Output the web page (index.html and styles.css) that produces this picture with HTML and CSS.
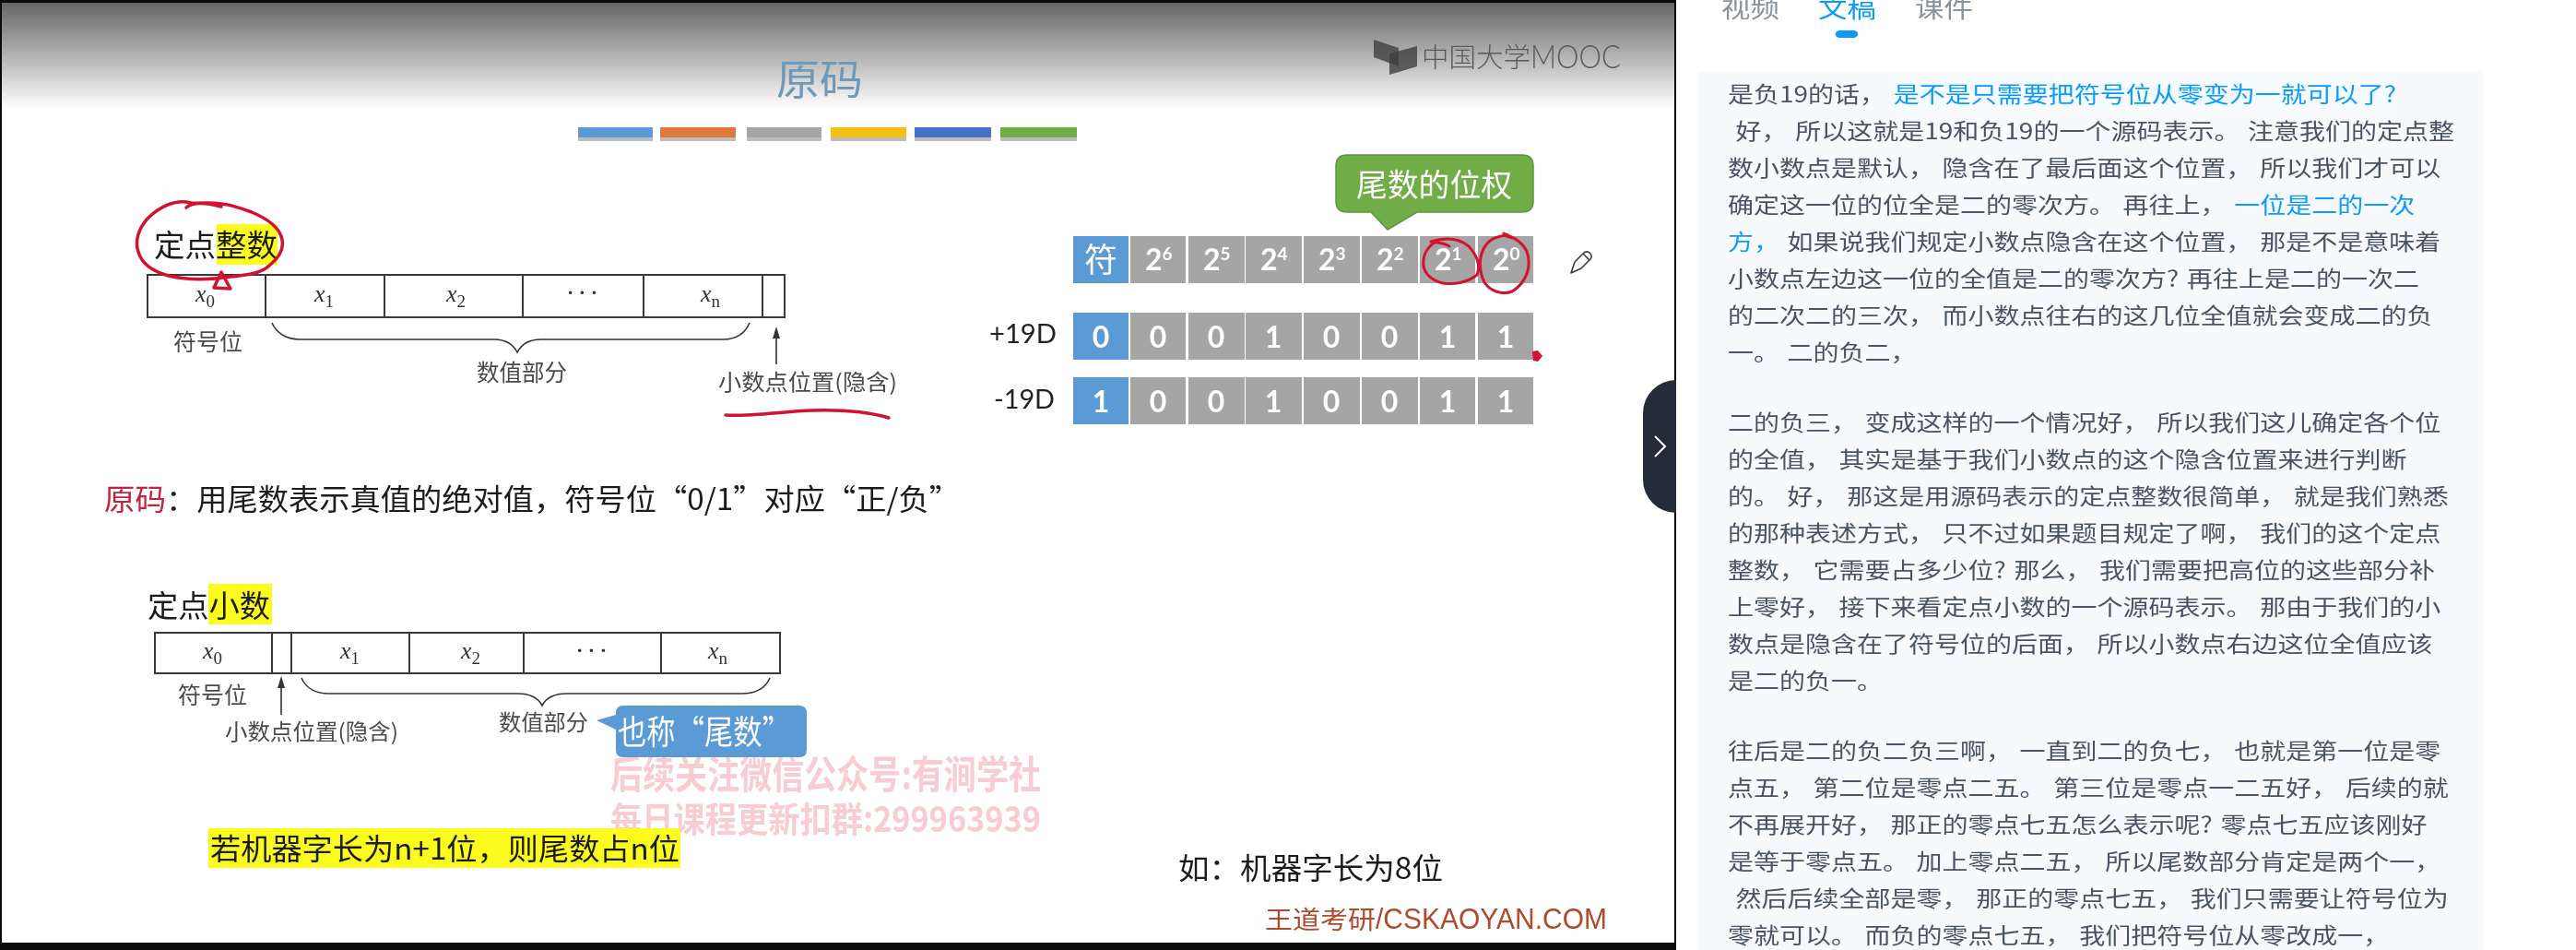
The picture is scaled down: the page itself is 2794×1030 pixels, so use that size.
FILE: index.html
```html
<!DOCTYPE html>
<html lang="zh">
<head>
<meta charset="utf-8">
<title>原码</title>
<link rel="stylesheet" href="styles.css">
</head>
<body>
<div class="page">
  <div class="video">
    <svg class="slide" width="1818" height="1030" viewBox="0 0 1818 1030">
      <defs>
        <linearGradient id="topfade" x1="0" y1="0" x2="0" y2="1">
          <stop offset="0" stop-color="#666666"/>
          <stop offset="1" stop-color="#ffffff"/>
        </linearGradient>
      </defs>
      <rect class="canvas" x="2" y="3" width="1814" height="1019"/>
      <rect x="2" y="3" width="1814" height="115" fill="url(#topfade)"/>

      <!-- logo -->
      <polygon class="book" points="1490,43 1517,52 1517,72 1490,62"/>
      <polygon class="book" points="1537,50 1537,72 1507,81 1507,58"/>
      <text class="cn logo-text" x="1542" y="73" font-size="29" textLength="118" lengthAdjust="spacingAndGlyphs">中国大学</text>
      <text class="lat logo-text" x="1660" y="74" font-size="36" textLength="98" lengthAdjust="spacingAndGlyphs">MOOC</text>

      <!-- title -->
      <text class="cn title" x="842" y="103" font-size="45" textLength="94" lengthAdjust="spacingAndGlyphs">原码</text>
      <rect class="bar-shadow" x="627" y="148" width="81" height="5"/>
      <rect class="bar-shadow" x="716" y="148" width="82" height="5"/>
      <rect class="bar-shadow" x="810" y="148" width="81" height="5"/>
      <rect class="bar-shadow" x="901" y="148" width="82" height="5"/>
      <rect class="bar-shadow" x="992" y="148" width="83" height="5"/>
      <rect class="bar-shadow" x="1085" y="148" width="83" height="5"/>
      <rect class="c-blue" x="627" y="138" width="81" height="11"/>
      <rect class="c-orange" x="716" y="138" width="82" height="11"/>
      <rect class="c-grey" x="810" y="138" width="81" height="11"/>
      <rect class="c-yellow" x="901" y="138" width="82" height="11"/>
      <rect class="c-navy" x="992" y="138" width="83" height="11"/>
      <rect class="c-green" x="1085" y="138" width="83" height="11"/>

      <!-- fixed point integer -->
      <rect class="marker" x="235" y="243" width="66" height="44"/>
      <text class="cn ink" x="167" y="278" font-size="33" textLength="134" lengthAdjust="spacingAndGlyphs">定点整数</text>
      <rect class="cell-line" x="160" y="298" width="691" height="46"/>
      <path class="cell-line" d="M288 298V344M417 298V344M567 298V344M698 298V344M827 298V344"/>
      <text class="math" x="212" y="327">x<tspan class="sub" dy="6">0</tspan></text>
      <text class="math" x="341" y="327">x<tspan class="sub" dy="6">1</tspan></text>
      <text class="math" x="484" y="327">x<tspan class="sub" dy="6">2</tspan></text>
      <text class="math dots" x="615" y="324">· · ·</text>
      <text class="math" x="760" y="327">x<tspan class="sub" dy="6">n</tspan></text>
      <text class="cn soft" x="188" y="380" font-size="25" textLength="75" lengthAdjust="spacingAndGlyphs">符号位</text>
      <path class="brace" d="M295 350C300 362 312 368 325 368H536C550 368 557 374 561 382C565 374 572 368 587 368H784C798 368 808 362 813 350"/>
      <text class="cn soft" x="517" y="413" font-size="25" textLength="98" lengthAdjust="spacingAndGlyphs">数值部分</text>
      <path class="brace" d="M842 395V360"/>
      <polygon class="arrow" points="842,354 838,367 846,367"/>
      <text class="cn soft" x="779" y="423" font-size="24" textLength="194" lengthAdjust="spacingAndGlyphs">小数点位置(隐含)</text>

      <!-- sign-magnitude definition -->
      <text class="cn red" x="113" y="553" font-size="32" textLength="67" lengthAdjust="spacingAndGlyphs">原码</text>
      <text class="cn ink" x="180" y="553" font-size="32" textLength="861" lengthAdjust="spacingAndGlyphs">：用尾数表示真值的绝对值，符号位“0/1”对应“正/负”</text>

      <!-- fixed point fraction -->
      <rect class="marker" x="226" y="633" width="69" height="44"/>
      <text class="cn ink" x="160" y="669" font-size="33" textLength="133" lengthAdjust="spacingAndGlyphs">定点小数</text>
      <rect class="cell-line" x="168" y="686" width="678" height="44"/>
      <path class="cell-line" d="M295 686V730M316 686V730M444 686V730M568 686V730M717 686V730"/>
      <text class="math" x="220" y="714">x<tspan class="sub" dy="6">0</tspan></text>
      <text class="math" x="369" y="714">x<tspan class="sub" dy="6">1</tspan></text>
      <text class="math" x="500" y="714">x<tspan class="sub" dy="6">2</tspan></text>
      <text class="math dots" x="625" y="712">· · ·</text>
      <text class="math" x="768" y="714">x<tspan class="sub" dy="6">n</tspan></text>
      <text class="cn soft" x="193" y="763" font-size="25" textLength="75" lengthAdjust="spacingAndGlyphs">符号位</text>
      <path class="brace" d="M305 775V742"/>
      <polygon class="arrow" points="305,733 301,746 309,746"/>
      <text class="cn soft" x="244" y="802" font-size="24" textLength="188" lengthAdjust="spacingAndGlyphs">小数点位置(隐含)</text>
      <path class="brace" d="M327 735C332 747 344 752 357 752H561C575 752 584 757 588 765C592 757 601 752 615 752H804C818 752 830 747 835 735"/>
      <text class="cn soft" x="541" y="792" font-size="24" textLength="97" lengthAdjust="spacingAndGlyphs">数值部分</text>

      <!-- watermark -->
      <text class="cn wm" x="662" y="855" font-size="42" textLength="467" lengthAdjust="spacingAndGlyphs">后续关注微信公众号:有涧学社</text>
      <text class="cn wm" x="662" y="902" font-size="38" textLength="467" lengthAdjust="spacingAndGlyphs">每日课程更新扣群:299963939</text>

      <!-- blue callout -->
      <path class="c-blue" d="M676 765H867Q875 765 875 773V813Q875 821 867 821H676Q668 821 668 813V791L647 781L668 775V773Q668 765 676 765Z"/>
      <text class="cn on-fill" x="670" y="807" font-size="36" textLength="188" lengthAdjust="spacingAndGlyphs">也称“尾数”</text>

      <rect class="marker" x="226" y="898" width="512" height="43"/>
      <text class="cn ink" x="228" y="932" font-size="32" textLength="509" lengthAdjust="spacingAndGlyphs">若机器字长为n+1位，则尾数占n位</text>

      <text class="cn ink" x="1278" y="953" font-size="32" textLength="287" lengthAdjust="spacingAndGlyphs">如：机器字长为8位</text>
      <text class="cn brand" x="1372" y="1007" font-size="27" textLength="120" lengthAdjust="spacingAndGlyphs">王道考研</text>
      <text class="lib brand" x="1492" y="1007" font-size="32" textLength="251" lengthAdjust="spacingAndGlyphs">/CSKAOYAN.COM</text>

      <!-- green callout -->
      <path class="c-green callout-green" d="M1461 168H1651Q1663 168 1663 180V218Q1663 230 1651 230H1537L1505 249L1487 230H1461Q1449 230 1449 218V180Q1449 168 1461 168Z"/>
      <text class="cn on-fill" x="1471" y="213" font-size="34" textLength="169" lengthAdjust="spacingAndGlyphs">尾数的位权</text>

      <!-- bit table -->
      <rect class="c-blue" x="1164" y="256" width="60" height="51"/>
      <rect class="c-grey" x="1226" y="256" width="60" height="51"/>
      <rect class="c-grey" x="1289" y="256" width="61" height="51"/>
      <rect class="c-grey" x="1351" y="256" width="61" height="51"/>
      <rect class="c-grey" x="1414" y="256" width="61" height="51"/>
      <rect class="c-grey" x="1477" y="256" width="61" height="51"/>
      <rect class="c-grey" x="1540" y="256" width="60" height="51"/>
      <rect class="c-grey" x="1603" y="256" width="60" height="51"/>
      <rect class="c-blue" x="1164" y="339" width="60" height="51"/>
      <rect class="c-grey" x="1226" y="339" width="60" height="51"/>
      <rect class="c-grey" x="1289" y="339" width="61" height="51"/>
      <rect class="c-grey" x="1351" y="339" width="61" height="51"/>
      <rect class="c-grey" x="1414" y="339" width="61" height="51"/>
      <rect class="c-grey" x="1477" y="339" width="61" height="51"/>
      <rect class="c-grey" x="1540" y="339" width="60" height="51"/>
      <rect class="c-grey" x="1603" y="339" width="60" height="51"/>
      <rect class="c-blue" x="1164" y="409" width="60" height="51"/>
      <rect class="c-grey" x="1226" y="409" width="60" height="51"/>
      <rect class="c-grey" x="1289" y="409" width="61" height="51"/>
      <rect class="c-grey" x="1351" y="409" width="61" height="51"/>
      <rect class="c-grey" x="1414" y="409" width="61" height="51"/>
      <rect class="c-grey" x="1477" y="409" width="61" height="51"/>
      <rect class="c-grey" x="1540" y="409" width="60" height="51"/>
      <rect class="c-grey" x="1603" y="409" width="60" height="51"/>

      <text class="cn on-fill mid" x="1194" y="295" font-size="36">符</text>
      <text class="bit" x="1242" y="293">2<tspan class="pow" dy="-11">6</tspan></text>
      <text class="bit" x="1305" y="293">2<tspan class="pow" dy="-11">5</tspan></text>
      <text class="bit" x="1367" y="293">2<tspan class="pow" dy="-11">4</tspan></text>
      <text class="bit" x="1430" y="293">2<tspan class="pow" dy="-11">3</tspan></text>
      <text class="bit" x="1493" y="293">2<tspan class="pow" dy="-11">2</tspan></text>
      <text class="bit" x="1556" y="293">2<tspan class="pow" dy="-11">1</tspan></text>
      <text class="bit" x="1619" y="293">2<tspan class="pow" dy="-11">0</tspan></text>

      <text class="bit mid" x="1194" y="377">0</text>
      <text class="bit mid" x="1256" y="377">0</text>
      <text class="bit mid" x="1319" y="377">0</text>
      <text class="bit mid" x="1381" y="377">1</text>
      <text class="bit mid" x="1444" y="377">0</text>
      <text class="bit mid" x="1507" y="377">0</text>
      <text class="bit mid" x="1570" y="377">1</text>
      <text class="bit mid" x="1633" y="377">1</text>

      <text class="bit mid" x="1194" y="447">1</text>
      <text class="bit mid" x="1256" y="447">0</text>
      <text class="bit mid" x="1319" y="447">0</text>
      <text class="bit mid" x="1381" y="447">1</text>
      <text class="bit mid" x="1444" y="447">0</text>
      <text class="bit mid" x="1507" y="447">0</text>
      <text class="bit mid" x="1570" y="447">1</text>
      <text class="bit mid" x="1633" y="447">1</text>

      <text class="lat row-label" x="1073" y="372" textLength="73" lengthAdjust="spacingAndGlyphs">+19D</text>
      <text class="lat row-label" x="1078" y="443" textLength="66" lengthAdjust="spacingAndGlyphs">-19D</text>

      <!-- pen annotations -->
      <path class="ink-red thick" d="M207 220C190 215 172 225 160 237C150 248 146 262 150 273C154 287 168 295 183 299C200 303 225 304 250 300C270 298 284 296 292 288C302 280 308 270 306 260C304 248 292 238 273 230C260 225 250 222 240 221C225 219 215 221 207 220"/>
      <path class="ink-red thick" d="M202 225C210 218 225 220 240 224"/>
      <path class="ink-red thick" d="M240 295L232 312L250 313Z"/>
      <path class="ink-red thick" d="M787 450C810 452 850 446 880 445C910 444 940 446 964 453"/>
      <path class="ink-red" d="M1572 267C1565 263 1558 263 1552 262C1565 258 1580 256 1593 267C1602 277 1606 288 1602 298C1592 306 1578 309 1565 307C1552 304 1542 295 1544 282C1545 272 1552 264 1560 261"/>
      <path class="ink-red" d="M1631 253L1644 259L1634 256C1646 258 1658 268 1658 283C1659 298 1650 310 1640 316C1630 320 1616 316 1610 306C1604 294 1604 280 1609 270C1614 260 1622 256 1636 255"/>
      <path class="dot-red" d="M1662 381L1668 380L1673 386L1668 392L1663 391Z"/>
      <path class="pen" d="M1704 296L1708 284L1718 274A5 5 0 0 1 1725 281L1715 291ZM1717 275L1724 282"/>
    </svg>
    <div class="handle" aria-hidden="true">
      <svg class="chevron" width="15" height="26" viewBox="0 0 15 26"><path d="M2 2L13 13L2 24"/></svg>
    </div>
  </div>

  <aside class="side">
    <nav class="tabs">
      <div class="tab">视频</div>
      <div class="tab active">文稿</div>
      <div class="tab">课件</div>
    </nav>
    <div class="panel">
      <div class="lines">
        <div class="para">
          <div class="line">是负19的话， <span class="blue current">是不是只需要把符号位从零变为一就可以了?</span></div>
          <div class="line"> 好， 所以这就是19和负19的一个源码表示。 注意我们的定点整</div>
          <div class="line">数小数点是默认， 隐含在了最后面这个位置， 所以我们才可以</div>
          <div class="line">确定这一位的位全是二的零次方。 再往上， <span class="blue">一位是二的一次</span></div>
          <div class="line"><span class="blue">方，</span> 如果说我们规定小数点隐含在这个位置， 那是不是意味着</div>
          <div class="line">小数点左边这一位的全值是二的零次方? 再往上是二的一次二</div>
          <div class="line">的二次二的三次， 而小数点往右的这几位全值就会变成二的负</div>
          <div class="line">一。 二的负二，</div>
        </div>
        <div class="para">
          <div class="line">二的负三， 变成这样的一个情况好， 所以我们这儿确定各个位</div>
          <div class="line">的全值， 其实是基于我们小数点的这个隐含位置来进行判断</div>
          <div class="line">的。 好， 那这是用源码表示的定点整数很简单， 就是我们熟悉</div>
          <div class="line">的那种表述方式， 只不过如果题目规定了啊， 我们的这个定点</div>
          <div class="line">整数， 它需要占多少位? 那么， 我们需要把高位的这些部分补</div>
          <div class="line">上零好， 接下来看定点小数的一个源码表示。 那由于我们的小</div>
          <div class="line">数点是隐含在了符号位的后面， 所以小数点右边这位全值应该</div>
          <div class="line">是二的负一。</div>
        </div>
        <div class="para">
          <div class="line">往后是二的负二负三啊， 一直到二的负七， 也就是第一位是零</div>
          <div class="line">点五， 第二位是零点二五。 第三位是零点一二五好， 后续的就</div>
          <div class="line">不再展开好， 那正的零点七五怎么表示呢? 零点七五应该刚好</div>
          <div class="line">是等于零点五。 加上零点二五， 所以尾数部分肯定是两个一，</div>
          <div class="line"> 然后后续全部是零， 那正的零点七五， 我们只需要让符号位为</div>
          <div class="line">零就可以。 而负的零点七五， 我们把符号位从零改成一，</div>
        </div>
      </div>
    </div>
  </aside>
</div>
</body>
</html>
```
FILE: styles.css
```css
* { box-sizing: border-box; }
html, body { margin: 0; padding: 0; background: #fff; }
body { font-family: "Noto Sans CJK SC", "Noto Sans", sans-serif; }

.page { display: flex; width: 2794px; height: 1030px; overflow: hidden; }

/* video column */
.video { position: relative; flex: 0 0 1818px; height: 1030px; background: #0b0b0b; }
.slide { display: block; filter: blur(0.6px); }
.canvas { fill: #ffffff; }

.handle {
  position: absolute; right: 0; top: 412px;
  width: 36px; height: 144px;
  background: #242c3a;
  border-radius: 36px 0 0 36px;
  display: flex; align-items: center; justify-content: center;
}
.chevron path { fill: none; stroke: #fff; stroke-width: 2px; }

/* slide text */
.cn { font-family: "Noto Sans CJK SC", sans-serif; font-weight: 400; }
.lat { font-family: Lato, sans-serif; }
.lib { font-family: "Liberation Sans", sans-serif; }
.ink { fill: #1c1c1c; }
.soft { fill: #4a4a4a; }
.red { fill: #c2233f; }
.title { fill: #7099b6; }
.logo-text { fill: #5a5a5a; font-weight: 300; }
.book { fill: #3c3c3c; fill-opacity: 0.78; }
.wm { fill: #f8ccd1; font-weight: 700; }
.brand { fill: #b04a2c; }
.on-fill { fill: #fff; }
.mid { text-anchor: middle; }
.math { font-family: "Liberation Serif", serif; font-style: italic; font-size: 26px; fill: #333; }
.math .sub { font-size: 19px; font-style: normal; }
.math.dots { font-style: normal; font-weight: 700; font-size: 22px; }
.bit { font-family: Lato, sans-serif; font-weight: 700; font-size: 32px; fill: #fff; }
.bit .pow { font-size: 19px; }
.row-label { font-size: 29px; fill: #222; }

/* slide shapes */
.c-blue { fill: #5b9bd5; }
.c-orange { fill: #e0793c; }
.c-grey { fill: #a5a5a5; }
.c-yellow { fill: #f5c012; }
.c-navy { fill: #4472c4; }
.c-green { fill: #70ad47; }
.callout-green { stroke: #5f9440; stroke-width: 1.5px; }
.bar-shadow { fill: #bdbdbd; }
.marker { fill: #fbfb1e; }
.cell-line { fill: none; stroke: #3a3a3a; stroke-width: 2px; }
.brace { fill: none; stroke: #333; stroke-width: 1.6px; }
.arrow { fill: #333; }
.ink-red { fill: none; stroke: #d2122e; stroke-width: 3px; stroke-linecap: round; stroke-linejoin: round; }
.ink-red.thick { stroke-width: 3.5px; }
.dot-red { fill: #d2122e; }
.pen { fill: #fff; stroke: #3d3d3d; stroke-width: 1.6px; stroke-linejoin: round; }

/* side column */
.side { flex: 1 1 auto; height: 1030px; padding-left: 24px; display: flex; flex-direction: column; }
.tabs { display: flex; gap: 51px; height: 78px; padding-left: 25px; flex: none; }
.tab {
  width: 54px; margin-top: -13px; height: 54px; position: relative;
  font-size: 27px; line-height: 42px; color: #8a929d; white-space: nowrap;
  transform: scaleX(1.1667); transform-origin: 0 0;
}
.tab.active { color: #0a9bff; }
.tab.active::after {
  content: ""; position: absolute; left: 16px; top: 46px;
  width: 21px; height: 8px; border-radius: 4px; background: #0a9bff;
}
.panel { width: 851px; flex: 1 1 auto; background: #f7f9fd; padding: 3px 0 0 32px; overflow: hidden; }
.lines {
  width: 700px; transform: scaleX(1.1667); transform-origin: 0 0;
  font-size: 24px; line-height: 40px; color: #4a5364; word-spacing: 2px;
  filter: blur(0.3px);
}
.para + .para { margin-top: 36px; }
.line { white-space: pre; height: 40px; }
.blue { color: #0a9bff; }
.current { background: #f5fbff; display: inline-block; }
```
